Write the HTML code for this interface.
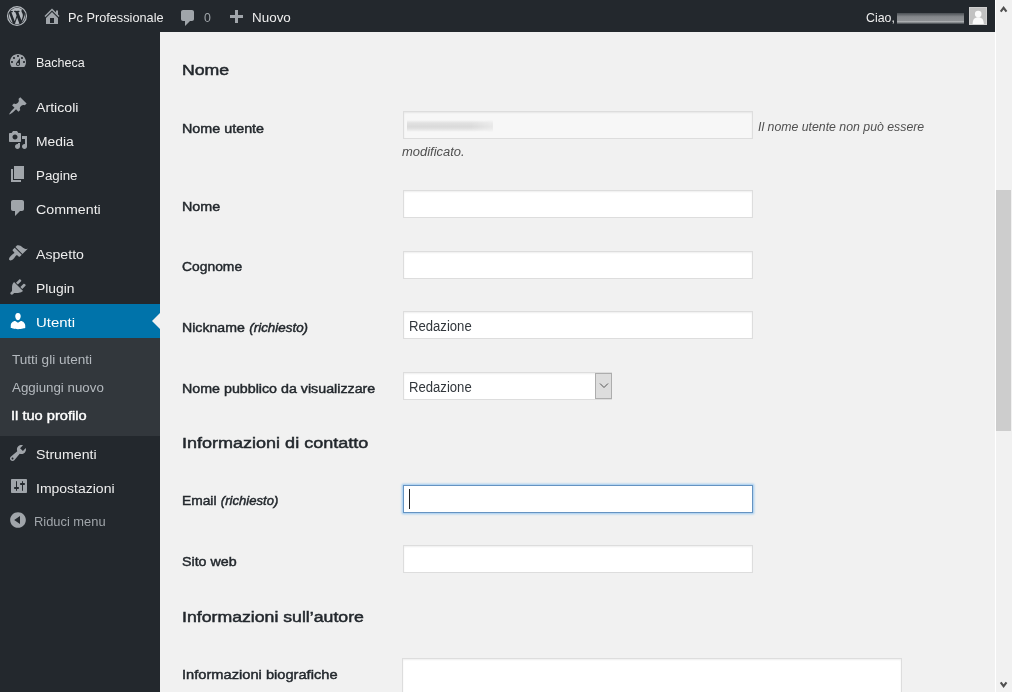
<!DOCTYPE html>
<html lang="it">
<head>
<meta charset="utf-8">
<title>Profilo ‹ Pc Professionale — WordPress</title>
<style>
html,body{margin:0;padding:0;}
body{width:1012px;height:692px;overflow:hidden;position:relative;background:#f1f1f1;font-family:"Liberation Sans",sans-serif;font-size:13px;color:#444;}
#adminbar{position:absolute;left:0;top:0;width:995px;height:32px;background:#23282d;}
#sidebar{position:absolute;left:0;top:32px;width:160px;height:660px;background:#23282d;}
#cur{position:absolute;left:0;top:304px;width:160px;height:34px;background:#0073aa;}
#sub{position:absolute;left:0;top:338px;width:160px;height:98px;background:#32373c;}
#arrow{position:absolute;left:152px;top:313px;width:0;height:0;border:8px solid transparent;border-right-color:#f1f1f1;border-left-width:0;}
#scroll{position:absolute;left:995px;top:0;width:17px;height:692px;background:#f1f1f1;border-left:1px solid #fff;box-sizing:border-box;}
#thumb{position:absolute;left:996px;top:190px;width:15px;height:241px;background:#cdcdcd;}
.t{position:absolute;white-space:nowrap;transform-origin:0 0;}
.ab{color:#eee;font-size:13px;line-height:18px;}
.mi{color:#eee;font-size:13.700px;line-height:18px;}
.sm{color:#b4b9be;font-size:13px;line-height:18px;}
.h{font-size:15.500px;font-weight:normal;-webkit-text-stroke:.5px #23282d;color:#23282d;line-height:22px;}
.lb{font-size:13.400px;font-weight:normal;-webkit-text-stroke:.45px #23282d;color:#23282d;line-height:18px;}
.lb i{font-size:12.700px;margin-left:.5px;}
.iv{font-size:14px;color:#32373c;line-height:18px;}
.desc{font-style:italic;font-size:12.500px;color:#505050;line-height:18px;}
.inp{position:absolute;left:403px;width:350px;height:28px;box-sizing:border-box;background:#fff;border:1px solid #ddd;box-shadow:inset 0 1px 2px rgba(0,0,0,.07);}
svg{position:absolute;overflow:visible;}
</style>
</head>
<body>
<div id="adminbar"></div>
<div id="sidebar"></div>
<div id="cur"></div>
<div id="sub"></div>
<div id="arrow"></div>
<div class="inp" style="top:111px;background:#f7f7f7"></div>
<div style="position:absolute;left:407px;top:120px;width:86px;height:12px;background:linear-gradient(180deg,rgba(220,220,220,0) 0,#e1e1e1 25%,#dadada 55%,#e2e2e2 75%,rgba(220,220,220,0) 100%);-webkit-mask-image:linear-gradient(90deg,#000 0,#000 75%,rgba(0,0,0,.5) 100%)"></div>
<div class="inp" style="top:190px"></div>
<div class="inp" style="top:251px"></div>
<div class="inp" style="top:311px"></div>
<div class="inp" style="top:372px;width:209px"></div>
<div style="position:absolute;left:595px;top:373px;width:17px;height:26px;box-sizing:border-box;background:#ddd;border:1px solid #adadad"></div>
<svg style="left:599px;top:382px" width="10" height="7" viewBox="0 0 10 7"><path d="M1 1.500l4 4 4-4" fill="none" stroke="#555" stroke-width="1"/></svg>
<div class="inp" style="top:485px;border-color:#6593c1;box-shadow:0 0 2px 1px rgba(130,190,240,.8)"></div>
<div style="position:absolute;left:409px;top:489px;width:1px;height:20px;background:#222"></div>
<div class="inp" style="top:545px"></div>
<div class="inp" style="top:658px;left:402px;width:500px;height:40px"></div>
<div style="position:absolute;left:897px;top:13px;width:67px;height:11px;background:linear-gradient(180deg,#4a4f54 0,#696d71 18%,#85888c 34%,#8d9093 68%,#adb0b2 78%,#7f8386 88%,#3d4247 100%);"></div>
<div style="position:absolute;left:969px;top:7px;width:18px;height:18px;box-sizing:border-box;background:#c2c2c2;border:1px solid #d0d0d0;overflow:hidden"><svg style="left:0;top:0" width="16" height="16" viewBox="0 0 16 16"><circle cx="8.200" cy="6" r="3.300" fill="#fafafa"/><path d="M2.600 16c0-4.800 2.200-6.800 5.600-6.800s5.600 2 5.600 6.800z" fill="#fafafa"/></svg></div>

<span class="t ab" style="left:67.5px;top:9px;transform:scaleX(0.9796);">Pc Professionale</span>
<span class="t ab" style="left:203.98px;top:9px;transform:scaleX(0.9505);color:#a0a5aa;">0</span>
<span class="t ab" style="left:251.5px;top:9px;transform:scaleX(1.0329);">Nuovo</span>
<span class="t ab" style="left:866.2px;top:9px;transform:scaleX(0.95);">Ciao,</span>
<span class="t mi" style="left:35.5px;top:54px;transform:scaleX(0.9162);">Bacheca</span>
<span class="t mi" style="left:36px;top:99px;transform:scaleX(1.0354);">Articoli</span>
<span class="t mi" style="left:35.5px;top:133px;transform:scaleX(1.0136);">Media</span>
<span class="t mi" style="left:35.5px;top:167px;transform:scaleX(0.9729);">Pagine</span>
<span class="t mi" style="left:36px;top:201px;transform:scaleX(1.0383);">Commenti</span>
<span class="t mi" style="left:36px;top:246px;transform:scaleX(1.0326);">Aspetto</span>
<span class="t mi" style="left:35.5px;top:280px;transform:scaleX(1.0125);">Plugin</span>
<span class="t mi" style="left:35.5px;top:314px;transform:scaleX(1.0908);color:#fff;">Utenti</span>
<span class="t sm" style="left:11.95px;top:351px;transform:scaleX(1.0425);">Tutti gli utenti</span>
<span class="t sm" style="left:11.5px;top:379px;transform:scaleX(1.024);">Aggiungi nuovo</span>
<span class="t sm" style="left:11.2px;top:407px;transform:scaleX(1.125);color:#fff;-webkit-text-stroke:.4px #fff;">Il tuo profilo</span>
<span class="t mi" style="left:36px;top:446px;transform:scaleX(1.0362);">Strumenti</span>
<span class="t mi" style="left:35.5px;top:480px;transform:scaleX(1.0222);">Impostazioni</span>
<span class="t mi" style="left:33.5px;top:513px;transform:scaleX(0.9909);font-size:13px;color:#a0a5aa;">Riduci menu</span>
<span class="t h" style="left:181.5px;top:59px;transform:scaleX(1.1415);">Nome</span>
<span class="t lb" style="left:181.5px;top:120px;transform:scaleX(1.0703);">Nome utente</span>
<span class="t desc" style="left:758px;top:118px;transform:scaleX(0.984);">Il nome utente non può essere</span>
<span class="t desc" style="left:402px;top:143px;transform:scaleX(1.0365);">modificato.</span>
<span class="t lb" style="left:181.5px;top:198px;transform:scaleX(1.0712);">Nome</span>
<span class="t lb" style="left:182px;top:258px;transform:scaleX(1.0352);">Cognome</span>
<span class="t lb" style="left:182px;top:319px;transform:scaleX(1.0552);">Nickname <i>(richiesto)</i></span>
<span class="t iv" style="left:408.89px;top:317px;transform:scaleX(0.9368);">Redazione</span>
<span class="t lb" style="left:181.5px;top:380px;transform:scaleX(1.064);">Nome pubblico da visualizzare</span>
<span class="t iv" style="left:409px;top:378px;transform:scaleX(0.9366);">Redazione</span>
<span class="t h" style="left:181.5px;top:432px;transform:scaleX(1.1621);">Informazioni di contatto</span>
<span class="t lb" style="left:181.5px;top:492px;transform:scaleX(1.0305);">Email <i>(richiesto)</i></span>
<span class="t lb" style="left:182px;top:553px;transform:scaleX(1.0631);">Sito web</span>
<span class="t h" style="left:181.5px;top:606px;transform:scaleX(1.1412);">Informazioni sull’autore</span>
<span class="t lb" style="left:182px;top:666px;transform:scaleX(1.0942);">Informazioni biografiche</span>
<svg style="left:7px;top:6px" width="20" height="20" viewBox="0 0 20 20"><defs><clipPath id="wc"><circle cx="10" cy="10" r="8.200"/></clipPath></defs><circle cx="10" cy="10" r="9.450" fill="none" stroke="#b4b9be" stroke-width="1.250"/><path clip-path="url(#wc)" fill="#b4b9be" d="M7.78 15.37L4.37 6.22c.55-.02 1.17-.08 1.17-.08.5-.06.44-1.13-.06-1.11 0 0-1.45.11-2.37.11-.18 0-.37 0-.58-.01C4.12 2.69 6.87 1.11 10 1.11c2.33 0 4.45.87 6.05 2.34-.68-.11-1.65.39-1.65 1.58 0 .74.45 1.36.9 2.1.35.61.55 1.36.55 2.46 0 1.49-1.4 5-1.4 5l-3.03-8.37c.54-.02.82-.17.82-.17.5-.05.44-1.25-.06-1.22 0 0-1.44.12-2.38.12-.87 0-2.33-.12-2.33-.12-.5-.03-.56 1.2-.06 1.22l.92.08 1.26 3.41zM17.41 10c.24-.64.74-1.87.43-4.25.7 1.29 1.05 2.71 1.05 4.25 0 3.29-1.73 6.24-4.4 7.78.97-2.59 1.94-5.2 2.92-7.78zM6.1 18.09C3.12 16.65 1.11 13.53 1.11 10c0-1.3.23-2.48.72-3.59C3.25 10.3 4.67 14.2 6.1 18.09zM10.13 11.46l2.58 6.98c-.86.29-1.76.45-2.71.45-.79 0-1.57-.11-2.29-.33.81-2.38 1.62-4.74 2.42-7.1z"/></svg>
<svg style="left:42px;top:6px" width="20" height="20" viewBox="0 0 20 20"><path fill="#a0a5aa" d="M16 8.5l1.53 1.53-1.06 1.06L10 4.62l-6.47 6.47-1.06-1.06L10 2.5l4 4v-2h2v4zm-6-2.46l6 5.99V18H4v-5.97zM12 17v-5H8v5h4z"/></svg>
<svg style="left:178px;top:7.5px" width="20" height="20" viewBox="0 0 20 20"><path fill="#a0a5aa" d="M5 2h9c1.1 0 2 .9 2 2v7c0 1.1-.9 2-2 2h-2l-5 5v-5H5c-1.1 0-2-.9-2-2V4c0-1.1.9-2 2-2z"/></svg>
<svg style="left:226px;top:8.4px" width="20" height="20" viewBox="0 0 20 20"><path fill="#a0a5aa" d="M17 7v3h-5v5H9v-5H4V7h5V2h3v5h5z"/></svg>
<svg style="left:8px;top:51px" width="20" height="20" viewBox="0 0 20 20"><path fill="#a0a5aa" d="M3.76 16h12.48c1.1-1.37 1.76-3.11 1.76-5 0-4.42-3.58-8-8-8s-8 3.58-8 8c0 1.89.66 3.63 1.76 5zM10 4c.55 0 1 .45 1 1s-.45 1-1 1-1-.45-1-1 .45-1 1-1zM6 6c.55 0 1 .45 1 1s-.45 1-1 1-1-.45-1-1 .45-1 1-1zm8 0c.55 0 1 .45 1 1s-.45 1-1 1-1-.45-1-1 .45-1 1-1zm-5.37 5.55L12 7v6c0 1.1-.9 2-2 2s-2-.9-2-2c0-.57.24-1.08.63-1.45zM4 10c.55 0 1 .45 1 1s-.45 1-1 1-1-.45-1-1 .45-1 1-1zm12 0c.55 0 1 .45 1 1s-.45 1-1 1-1-.45-1-1 .45-1 1-1zm-5 3c0-.55-.45-1-1-1s-1 .45-1 1 .45 1 1 1 1-.45 1-1z"/></svg>
<svg style="left:8px;top:96px" width="20" height="20" viewBox="0 0 20 20"><path fill="#a0a5aa" d="M10.44 3.02l1.82-1.82 6.36 6.35-1.83 1.82c-1.05-.68-2.48-.57-3.41.36l-.75.75c-.92.93-1.04 2.35-.35 3.41l-1.83 1.82-2.41-2.41-2.8 2.79c-.42.42-3.38 2.71-3.8 2.29s1.860-3.390 2.280-3.810l2.790-2.790L4.100 9.360l1.830-1.820c1.050.69 2.480.57 3.400-.36l.75-.75c.93-.92 1.050-2.350.36-3.410z"/></svg>
<svg style="left:8px;top:130px" width="20" height="20" viewBox="0 0 20 20"><path fill="#a0a5aa" d="M13 11V4c0-.55-.45-1-1-1h-1.670L9 1H5L3.670 3H2c-.55 0-1 .45-1 1v7c0 .55.45 1 1 1h10c.55 0 1-.45 1-1zM7 4.500c1.380 0 2.500 1.120 2.500 2.500S8.380 9.500 7 9.500 4.500 8.380 4.500 7 5.620 4.500 7 4.500zM14 6h5v10.500c0 1.380-1.120 2.500-2.500 2.500S14 17.880 14 16.500s1.120-2.500 2.500-2.500c.17 0 .34.020.5.050V9h-3V6zm-4 8.050V13h2v3.500c0 1.380-1.120 2.500-2.500 2.500S7 17.880 7 16.500 8.120 14 9.500 14c.17 0 .34.020.5.050z"/></svg>
<svg style="left:8px;top:164px" width="20" height="20" viewBox="0 0 20 20"><path fill="#a0a5aa" d="M6 15V2h10v13H6zm-1 1h8v2H3V5h2v11z"/></svg>
<svg style="left:8px;top:198px" width="20" height="20" viewBox="0 0 20 20"><path fill="#a0a5aa" d="M5 2h9c1.1 0 2 .9 2 2v7c0 1.1-.9 2-2 2h-2l-5 5v-5H5c-1.1 0-2-.9-2-2V4c0-1.1.9-2 2-2z"/></svg>
<svg style="left:8px;top:243px" width="20" height="20" viewBox="0 0 20 20"><path fill="#a0a5aa" d="M14.48 11.06L7.41 3.990l1.500-1.500c.5-.56 2.300-.47 3.510.32 1.210.8 1.430 1.280 2.910 2.100 1.180.64 2.450 1.260 4.450.85zm-.71.71L6.700 4.700 4.930 6.470c-.39.39-.39 1.020 0 1.410l1.060 1.060c.39.39.39 1.030 0 1.420-.6.600-1.430 1.110-2.210 1.690-.35.260-.7.530-1.010.84C1.430 14.230.4 16.080 1.400 17.070c.99 1 2.840-.03 4.180-1.360.31-.31.580-.66.850-1.020.57-.78 1.080-1.610 1.690-2.210.39-.39 1.020-.39 1.410 0l1.060 1.060c.39.39 1.020.39 1.410 0z"/></svg>
<svg style="left:8px;top:277px" width="20" height="20" viewBox="0 0 20 20"><path fill="#a0a5aa" d="M13.11 4.360L9.870 7.600 8 5.730l3.240-3.240c.35-.34 1.050-.2 1.560.32.520.51.660 1.210.31 1.550zm-8 1.770l.91-1.120 9.010 9.010-1.190.84c-.71.710-2.630 1.160-3.820 1.160H6.140L4.900 17.260c-.59.59-1.540.59-2.120 0-.59-.58-.59-1.530 0-2.120l1.240-1.240v-3.880c0-1.130.4-3.190 1.090-3.890zm7.260 3.970l3.240-3.240c.34-.35 1.040-.21 1.550.31.520.51.660 1.210.31 1.550l-3.240 3.250z"/></svg>
<svg style="left:8px;top:311px" width="20" height="20" viewBox="0 0 20 20"><path fill="#fff" d="M10 9.250c-2.270 0-2.730-3.440-2.730-3.440C7 4.020 7.820 2 9.970 2c2.160 0 2.980 2.020 2.710 3.810 0 0-.41 3.440-2.680 3.440zm0 2.570L12.720 10c2.390 0 4.520 2.330 4.520 4.530v2.490s-3.650 1.130-7.240 1.130c-3.650 0-7.240-1.130-7.240-1.130v-2.490c0-2.250 1.940-4.480 4.470-4.480z"/></svg>
<svg style="left:8px;top:442.5px" width="20" height="20" viewBox="0 0 20 20"><path fill="#a0a5aa" d="M16.68 9.770c-1.340 1.340-3.300 1.670-4.950.99l-5.410 6.520c-.99.99-2.590.99-3.580 0s-.99-2.590 0-3.570l6.520-5.420c-.68-1.650-.35-3.610.99-4.950 1.280-1.280 3.120-1.620 4.720-1.060l-2.890 2.890 2.820 2.820 2.860-2.870c.53 1.580.18 3.390-1.080 4.650zM3.810 16.210c.4.39 1.040.39 1.430 0 .4-.4.400-1.040 0-1.430-.39-.4-1.030-.4-1.430 0-.39.39-.39 1.030 0 1.430z"/></svg>
<svg style="left:8.5px;top:476px" width="20" height="20" viewBox="0 0 20 20"><path fill="#a0a5aa" d="M18 16V4c0-.55-.45-1-1-1H3c-.55 0-1 .45-1 1v12c0 .55.45 1 1 1h14c.55 0 1-.45 1-1zM8 11h1c.55 0 1 .45 1 1s-.45 1-1 1H8v1.500c0 .28-.22.500-.5.500s-.5-.22-.5-.500V13H6c-.55 0-1-.45-1-1s.45-1 1-1h1V5.500c0-.28.220-.5.500-.5s.5.220.5.500V11zm5-2h-1c-.55 0-1-.45-1-1s.45-1 1-1h1V5.500c0-.28.220-.5.500-.5s.5.220.5.500V7h1c.55 0 1 .45 1 1s-.45 1-1 1h-1v5.500c0 .28-.22.500-.5.500s-.5-.22-.5-.500V9z"/></svg>
<svg style="left:8px;top:510px" width="20" height="20" viewBox="0 0 20 20"><path fill="#a0a5aa" d="M10 2.160c4.330 0 7.840 3.510 7.840 7.840s-3.510 7.840-7.840 7.840S2.160 14.330 2.160 10 5.670 2.160 10 2.160zm2 11.720V6.120L6.180 9.970z"/></svg>
<div id="scroll"></div>
<div id="thumb"></div>
<svg style="left:1000px;top:5.500px" width="8" height="7" viewBox="0 0 8 7"><path d="M0.700 5.700L3.600 1.800l2.900 3.900" fill="none" stroke="#505050" stroke-width="2.100"/></svg>
<svg style="left:1000px;top:680.500px" width="8" height="7" viewBox="0 0 8 7"><path d="M0.700 1.300L3.600 5.200l2.900-3.900" fill="none" stroke="#505050" stroke-width="2.100"/></svg>

</body>
</html>
